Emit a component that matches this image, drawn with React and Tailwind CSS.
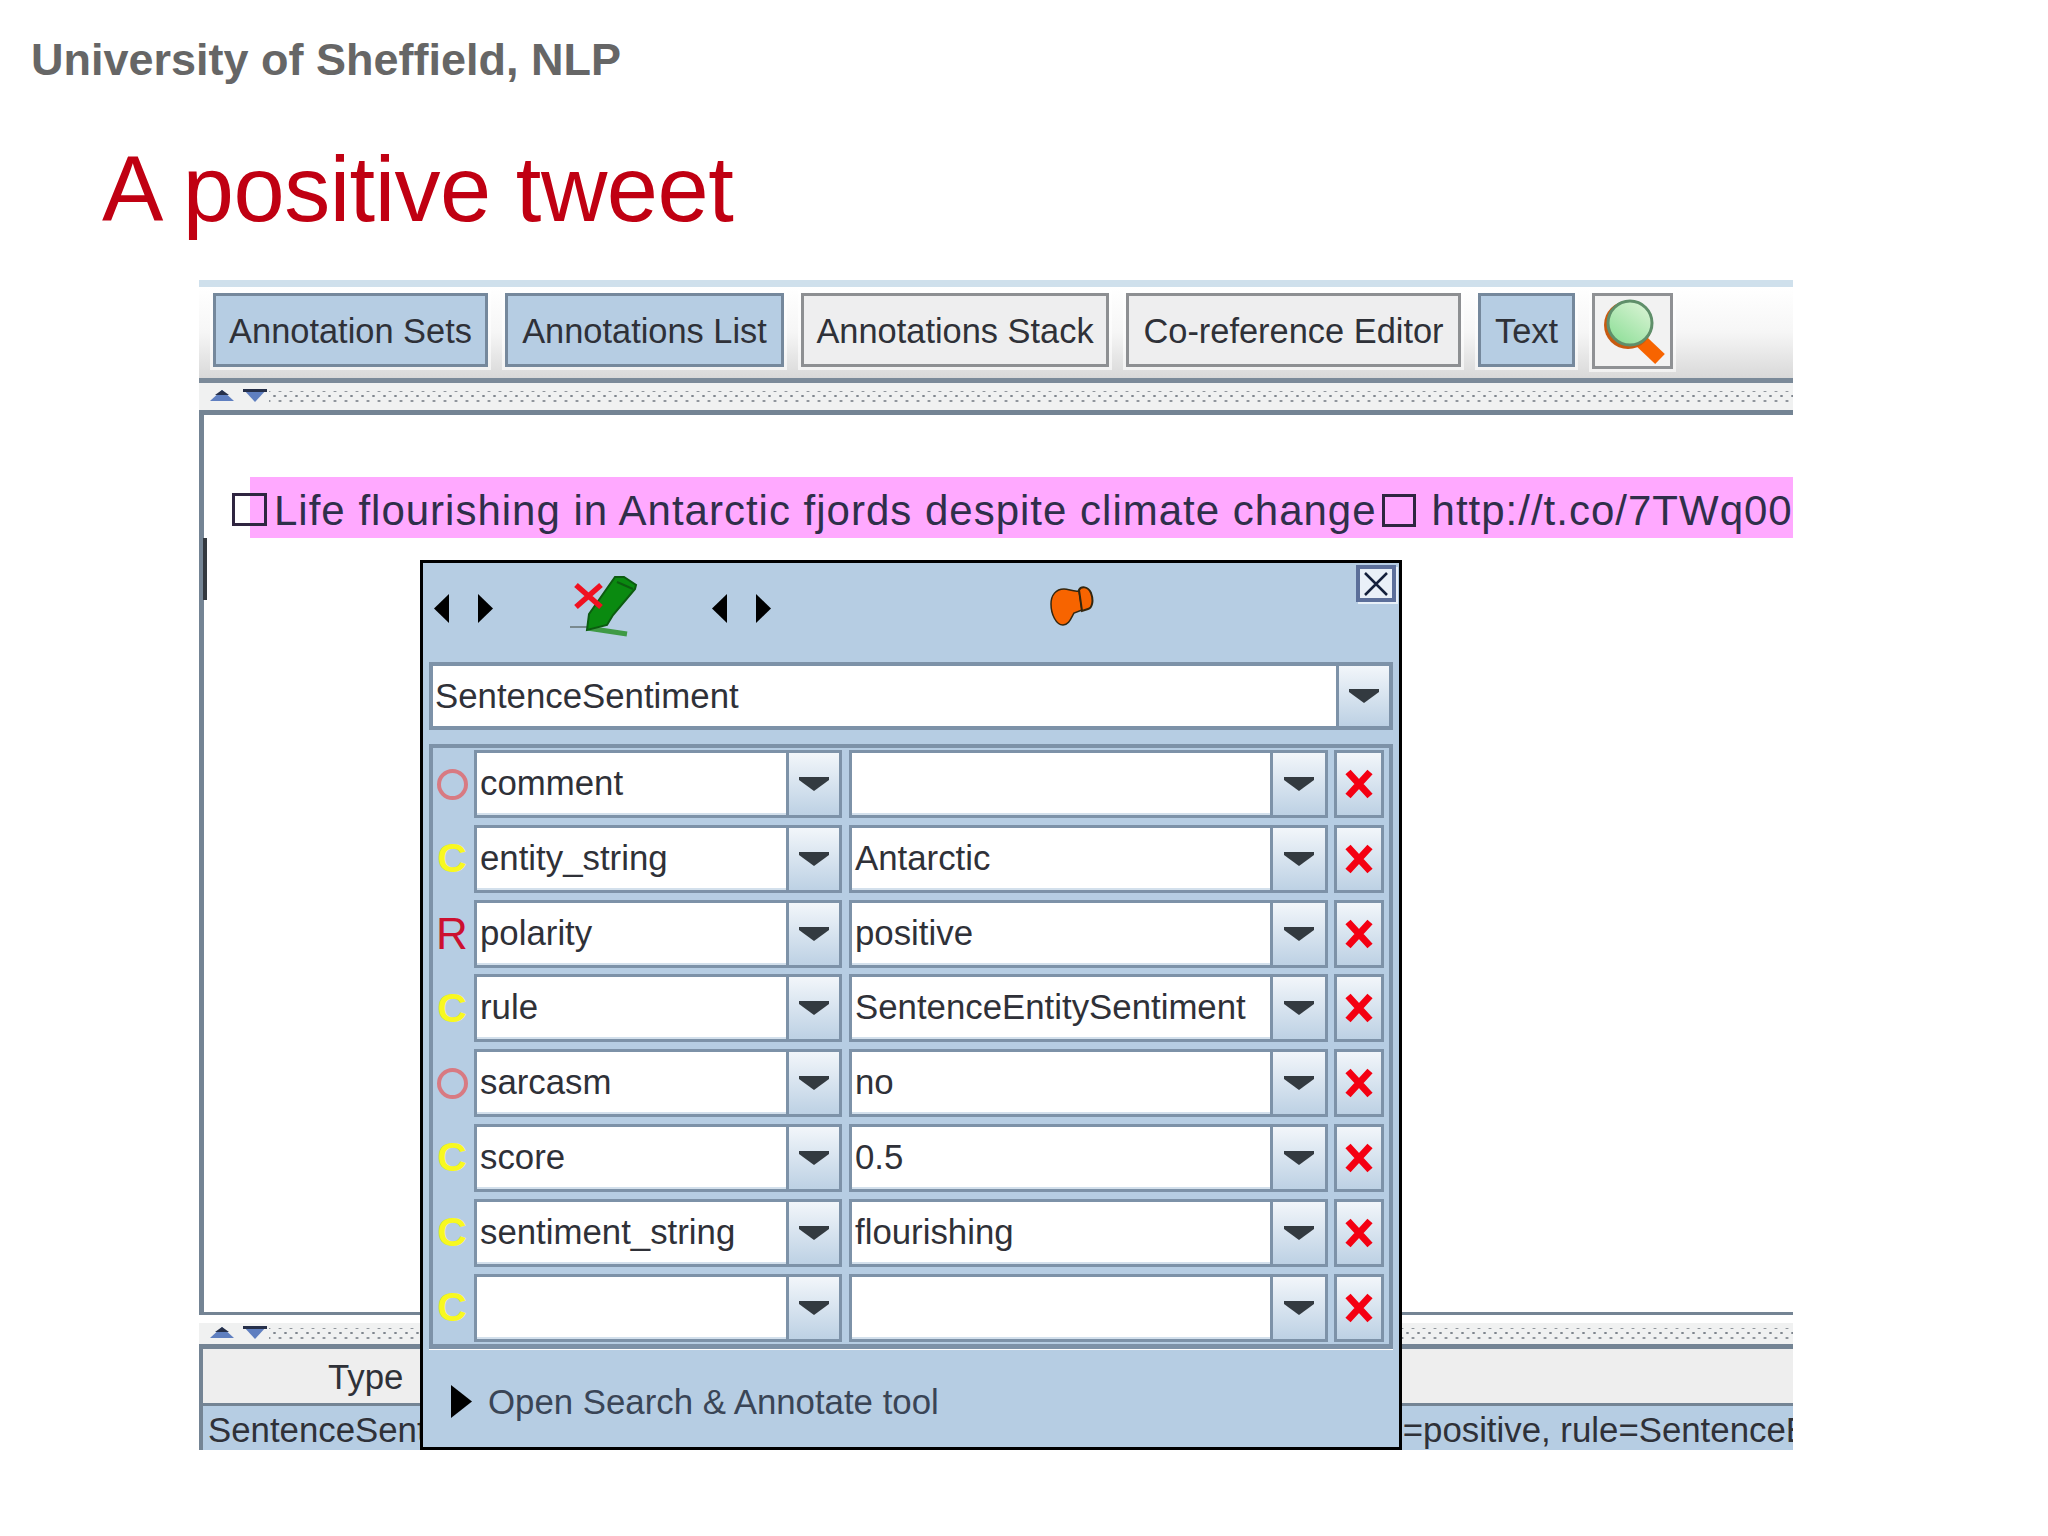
import React from "react";

const ROWS = [
  { tag: "O", name: "comment", value: "" },
  { tag: "C", name: "entity_string", value: "Antarctic" },
  { tag: "R", name: "polarity", value: "positive" },
  { tag: "C", name: "rule", value: "SentenceEntitySentiment" },
  { tag: "O", name: "sarcasm", value: "no" },
  { tag: "C", name: "score", value: "0.5" },
  { tag: "C", name: "sentiment_string", value: "flourishing" },
  { tag: "C", name: "", value: "" },
];

const TABS = [
  { label: "Annotation Sets", on: true, w: "w-[275px]" },
  { label: "Annotations List", on: true, w: "w-[279px]" },
  { label: "Annotations Stack", on: false, w: "w-[308px]" },
  { label: "Co-reference Editor", on: false, w: "w-[335px]" },
  { label: "Text", on: true, w: "w-[97px]" },
];

const DropArrow = () => (
  <svg width="30" height="14" viewBox="0 0 30 14" className="block">
    <path d="M0 0H30V3L15 14L0 3Z" fill="#333a40" />
  </svg>
);

const RedX = () => (
  <svg width="30" height="30" viewBox="0 0 30 30" className="block">
    <path d="M4 3L26 27M26 3L4 27" stroke="#f40012" strokeWidth="7" fill="none" />
  </svg>
);

const Caret = ({ left }) => (
  <svg width="16" height="29" viewBox="0 0 16 29" className="block">
    <path d={left ? "M15 0V29L0 14.5Z" : "M1 0V29L16 14.5Z"} fill="#000" />
  </svg>
);

const Divider = ({ h }) => (
  <div className={`${h} bg-[#f0f1f1] flex items-center pl-[11px] gap-[2px] overflow-hidden`}>
    <svg width="24" height="11" viewBox="0 0 24 11" className="block shrink-0 mt-[-2px]">
      <path d="M0 11L12 0L24 11Z" fill="#5f7fc0" />
      <path d="M5 5H19L12 0Z" fill="#26304a" />
    </svg>
    <svg width="24" height="13" viewBox="0 0 24 13" className="block shrink-0 mt-[-2px] ml-[7px]">
      <path d="M0 0H24L12 13Z" fill="#5f7fc0" />
      <path d="M0 0H24V3H0Z" fill="#26304a" />
    </svg>
    <div className="flex-1 h-[12px] bg-[radial-gradient(circle,#7f868e_1px,transparent_1.4px),radial-gradient(circle,#7f868e_1px,transparent_1.4px)] bg-[length:11px_10px] bg-[position:0_0,5.5px_5px]" />
  </div>
);

const TagIcon = ({ tag }) => {
  if (tag === "O") return <span className="block w-[31px] h-[31px] rounded-full border-[4px] border-[#d87a82]" />;
  if (tag === "R") return <span className="text-[44px] leading-none text-[#cc1030]">R</span>;
  return <span className="text-[41px] leading-none text-[#f8f820] font-bold">C</span>;
};

const FieldBox = ({ text, w, arrowW }) => (
  <div className={`${w} h-full flex border-[3px] border-[#7d92a8] bg-white`}>
    <div className="flex-1 flex items-center pl-[3px] border-b-[2px] border-b-[#d3e0ec] overflow-hidden whitespace-nowrap">{text}</div>
    <div className={`${arrowW} flex items-center justify-center border-l-[3px] border-l-[#7d92a8] bg-gradient-to-b from-[#f2f6fa] to-[#bdd1e4]`}>
      <DropArrow />
    </div>
  </div>
);

const Row = ({ row }) => (
  <div className="h-[68px] flex items-center">
    <div className="w-[41px] pr-[3px] flex items-center justify-center shrink-0">
      <TagIcon tag={row.tag} />
    </div>
    <FieldBox text={row.name} w="w-[368px]" arrowW="w-[53px]" />
    <div className="w-[7px] shrink-0" />
    <FieldBox text={row.value} w="w-[479px]" arrowW="w-[55px]" />
    <div className="w-[6px] shrink-0" />
    <div className="w-[50px] h-full flex items-center justify-center border-[3px] border-[#7d92a8] bg-gradient-to-b from-[#f2f6fa] to-[#bdd1e4]">
      <RedX />
    </div>
  </div>
);

const Popup = () => (
  <div className="absolute left-[221px] top-[280px] w-[982px] h-[890px] bg-[#b6cde3] border-[3px] border-black flex flex-col text-[#2f3138]">
    <div className="relative h-[99px] shrink-0">
      <div className="absolute left-[11px] top-[31px]"><Caret left /></div>
      <div className="absolute left-[54px] top-[31px]"><Caret /></div>
      <svg width="70" height="66" viewBox="0 0 70 66" className="absolute left-[146px] top-[11px]">
        <path d="M1 53H18" stroke="#7a8a90" strokeWidth="2" />
        <path d="M18 54L58 60" stroke="#3f9a45" strokeWidth="5" />
        <path d="M46 3L55 3L67 11L66 15L44 41L38 51L18 56L20 40Z" fill="#0a8a10" stroke="#0c5c10" strokeWidth="2" />
        <path d="M48 8L64 15" stroke="#0c5c10" strokeWidth="2" />
        <path d="M7 11L32 33M32 11L7 33" stroke="#f01020" strokeWidth="5.5" />
      </svg>
      <div className="absolute left-[289px] top-[31px]"><Caret left /></div>
      <div className="absolute left-[332px] top-[31px]"><Caret /></div>
      <svg width="46" height="42" viewBox="0 0 46 42" className="absolute left-[626px] top-[23px]">
        <path d="M2 18C2 9 7 3 15 3C20 3 24 6 30 5L33 24L25 27C22 32 20 39 14 39C7 39 2 28 2 18Z" fill="#f76400" stroke="#33260f" strokeWidth="1.5" />
        <path d="M30 4C32 0 39 0 42 7C45 15 43 22 39 23L33 25Z" fill="#f76400" stroke="#33260f" strokeWidth="2" />
      </svg>
      <div className="absolute right-[3px] top-[2px] w-[40px] h-[37px] bg-[#e9f0f8] border-[4px] border-[#5c6f9a] shadow-[2px_2px_0_#e8f0f8] flex items-center justify-center">
        <svg width="26" height="24" viewBox="0 0 26 24" className="block">
          <path d="M2 1L24 23M24 1L2 23" stroke="#14203c" strokeWidth="2.5" />
        </svg>
      </div>
    </div>
    <div className="mx-[6px] h-[68px] flex border-[4px] border-[#7d92a8] bg-white shrink-0">
      <div className="flex-1 flex items-center pl-[2px]">SentenceSentiment</div>
      <div className="w-[53px] flex items-center justify-center border-l-[3px] border-l-[#7d92a8] bg-gradient-to-b from-[#f2f6fa] to-[#bdd1e4]">
        <DropArrow />
      </div>
    </div>
    <div className="mx-[6px] mt-[14px] border-[4px] border-b-[5px] border-[#7d92a8] pt-[2px] flex flex-col gap-[6.8px] pb-[2px] shrink-0">
      {ROWS.map((row, i) => (
        <Row key={i} row={row} />
      ))}
    </div>
    <div className="h-px bg-white mx-[6px]" />
    <div className="flex items-center pl-[28px] gap-[16px] mt-[26px]">
      <svg width="21" height="33" viewBox="0 0 21 33" className="block">
        <path d="M0 0V33L21 16.5Z" fill="#000" />
      </svg>
      <span className="text-[#3a4556]">Open Search &amp; Annotate tool</span>
    </div>
  </div>
);

const Toolbar = () => (
  <div className="h-[91px] flex items-start pt-[6px] pl-[14px] gap-[17px] bg-gradient-to-b from-white via-[#f6f6f6] to-[#d9d9d9]">
    {TABS.map((t) => (
      <div
        key={t.label}
        className={`${t.w} h-[74px] pt-[3px] text-[34.4px] shrink-0 flex items-center justify-center border-[3px] shadow-[0_0_0_3px_#ffffff99] ${t.on ? "bg-[#b6cde3] border-[#75889c]" : "bg-[#eeeeef] border-[#8d8f92]"}`}
      >
        {t.label}
      </div>
    ))}
    <div className="w-[81px] h-[76px] shrink-0 flex items-center justify-center border-[3px] border-[#8f9194] bg-[#f2f2f2] shadow-[0_0_0_3px_#ffffff99]">
      <svg width="68" height="68" viewBox="0 0 68 68" className="block">
        <defs>
          <linearGradient id="lens" x1="0.8" y1="0.1" x2="0.2" y2="0.9">
            <stop offset="0" stopColor="#d4f2d0" />
            <stop offset="1" stopColor="#93e09c" />
          </linearGradient>
        </defs>
        <path d="M42 44L61 62" stroke="#f76400" strokeWidth="14" />
        <circle cx="29" cy="28" r="24" fill="#c85a10" />
        <circle cx="31" cy="26" r="22" fill="url(#lens)" stroke="#5f8f6a" strokeWidth="3" />
      </svg>
    </div>
  </div>
);

export default function App() {
  return (
    <div className="w-[2048px] h-[1536px] bg-white overflow-hidden font-['Liberation_Sans',Arial,sans-serif]">
      <div className="pl-[31px] pt-[33px] h-[130px] text-[45px] leading-[54px] font-bold text-[#666666]">University of Sheffield, NLP</div>
      <div className="pl-[102px] pt-[4px] h-[150px] text-[92px] leading-[110px] tracking-[-0.5px] text-[#c00012]">A positive tweet</div>
      <div className="relative ml-[199px] w-[1594px] h-[1170px] flex flex-col text-[34.8px] text-[#2f3138]">
        <div className="h-[7px] bg-[#cfe0ec]" />
        <Toolbar />
        <div className="h-[5px] bg-[#7b8a99]" />
        <Divider h="h-[27px]" />
        <div className="flex-1 flex flex-col border-t-[5px] border-l-[5px] border-b-[3px] border-[#748494] bg-white">
          <div className="mt-[62px] h-[61px] ml-[46px] pt-[6px] bg-[#ffa9ff] flex items-center text-[42px] tracking-[1px] whitespace-nowrap overflow-hidden text-[#2f2f4a]">
            <span className="pl-[24px]">Life flourishing in Antarctic fjords despite climate change</span>
            <span className="ml-[5px] w-[34px] h-[33px] border-[3px] border-[#2f2540] shrink-0" />
            <span className="ml-[16px]">http://t.co/7TWq00</span>
          </div>
          <div className="absolute left-[33px] top-[213px] w-[35px] h-[33px] border-[3px] border-[#2f2540]" />
          <div className="absolute left-[4px] top-[258px] w-[4px] h-[62px] bg-[#33383e]" />
        </div>
        <div className="h-[8px] bg-white" />
        <Divider h="h-[21px]" />
        <div className="h-[5px] bg-[#748494]" />
        <div className="h-[101px] flex flex-col border-l-[4px] border-[#748494]">
          <div className="h-[57px] pt-[3px] bg-[#eeeeee] flex items-center pl-[125px] border-b-[3px] border-[#748494]">Type</div>
          <div className="flex-1 pt-[5px] bg-[#b6cde3] flex items-center whitespace-nowrap overflow-hidden pl-[5px]">
            <span>SentenceSentiment</span>
            <span className="ml-[891px]">=positive, rule=SentenceEntitySentiment</span>
          </div>
        </div>
        <Popup />
      </div>
    </div>
  );
}
